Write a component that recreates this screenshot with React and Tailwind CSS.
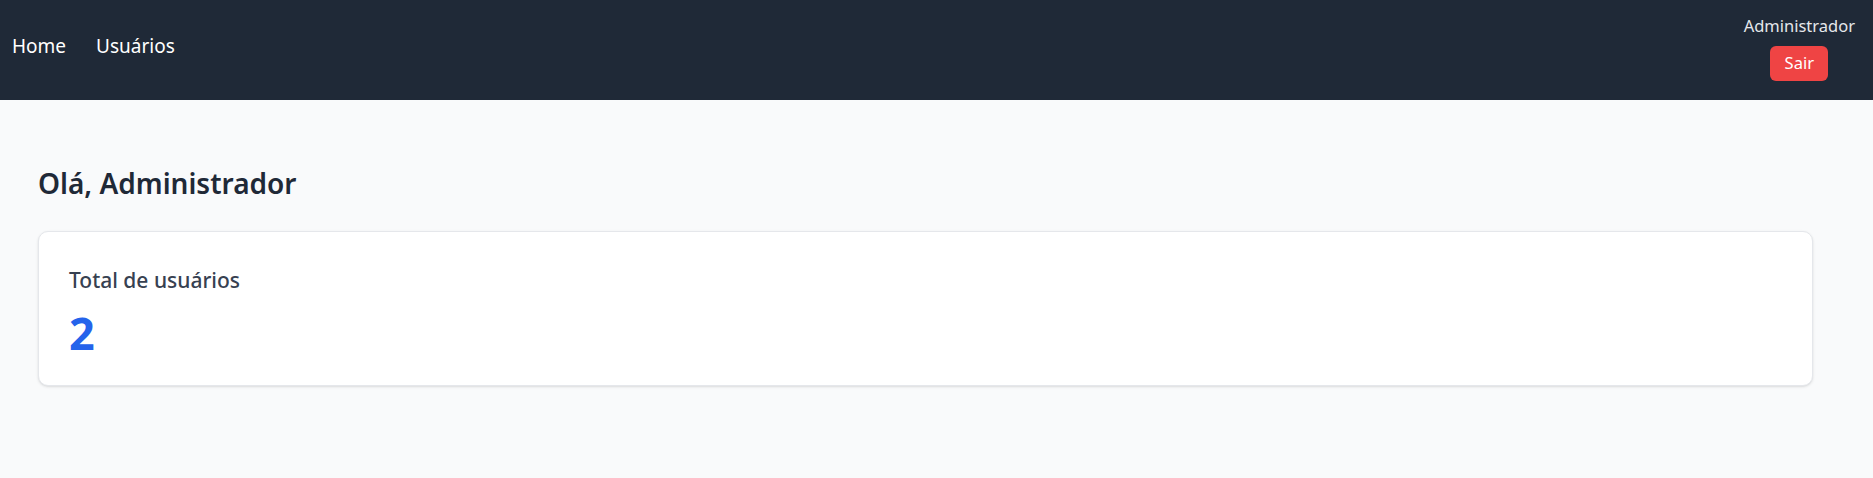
export default function App() {
  return (
    <div className="min-h-screen bg-[#f9fafb]" style={{ fontFamily: '"Segoe UI", "Noto Sans", sans-serif' }}>
      <nav className="h-[100px] bg-[#1f2937] flex items-center justify-between pl-[12px] pr-[18px]">
        <div className="flex items-center gap-[30px] text-white text-[19px] pb-[8px]">
          <a href="#" className="hover:text-gray-300">Home</a>
          <a href="#" className="hover:text-gray-300">Usuários</a>
        </div>
        <div className="flex flex-col items-center gap-[8px] text-white text-[16.5px] pb-[6px]">
          <span className="leading-[25px] text-[#e5e7eb]">Administrador</span>
          <button className="bg-[#ef4444] hover:bg-[#dc2626] text-white w-[58px] h-[35px] rounded-[6px] cursor-pointer">
            Sair
          </button>
        </div>
      </nav>

      <main className="pt-[64px] pl-[38px] w-[1813px]">
        <h1 className="text-[#1f2937] text-[28px] font-semibold leading-[38px] mb-[29px]">Olá, Administrador</h1>
        <div className="bg-white border border-[#e5e7eb] rounded-[10px] shadow-sm h-[155px] px-[30px] pt-[33px]">
          <p className="text-[#374151] text-[21px] font-medium leading-[30px]">Total de usuários</p>
          <p className="text-[#2563eb] text-[45px] font-bold leading-[56px] mt-[10px]">2</p>
        </div>
      </main>
    </div>
  );
}
